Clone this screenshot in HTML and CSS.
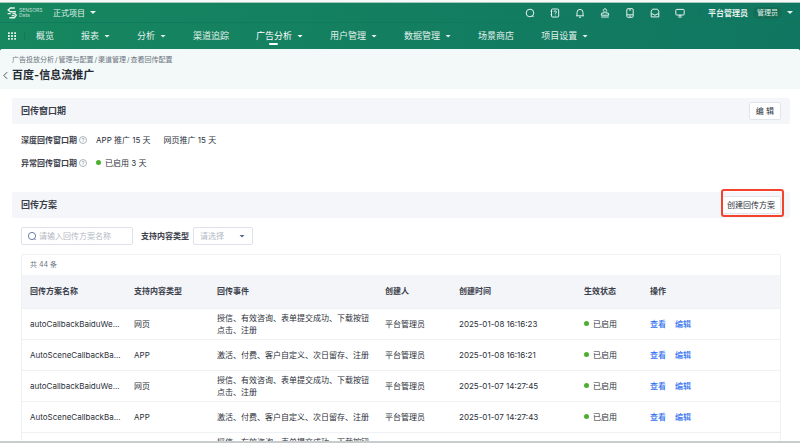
FILE: index.html
```html
<!DOCTYPE html>
<html lang="zh-CN">
<head>
<meta charset="utf-8">
<meta name="viewport" content="width=device-width, initial-scale=1">
<title>百度-信息流推广</title>
<link rel="stylesheet" href="styles.css">
</head>
<body>
<div class="window">
  <header class="header">
    <div class="topbar">
      <a class="logo" href="#" aria-label="SENSORS Data">
        <svg class="logo-mark" viewBox="0 0 10 12" fill="none" stroke="currentColor" stroke-width="1.4">
          <path d="M7.8 1H3.4L1.2 3 3.2 4.8H9M.6 6.6h3.2"/><path d="M5.4 6.6h2.4l1.4 1.6-1.8 2.6H2.4M4.6 8.6h3"/>
        </svg>
        <span class="logo-text"><span>SENSORS</span><span>Data</span></span>
      </a>
      <button class="project" type="button">正式项目<i class="caret"></i></button>
      <div class="tools">
        <button type="button" aria-label="搜索"><svg viewBox="0 0 10 10"><circle cx="5" cy="5" r="3.8"/><path d="M7 7.4l1.6 1.6"/></svg></button>
        <button type="button" aria-label="帮助"><svg viewBox="0 0 10 10"><rect x="1.5" y="1" width="7.2" height="8" rx="1"/><path d="M.6 3.3h1.6M.6 6.7h1.6M4 4a1.2 1.2 0 1 1 1.3 1.2v.7M5.3 6.8v.6"/></svg></button>
        <button type="button" aria-label="通知"><svg viewBox="0 0 10 10"><path d="M2 7.6V4.4a3 3 0 0 1 6 0v3.2M1 7.8h8M4 9.2h2"/></svg></button>
        <button type="button" aria-label="审批"><svg viewBox="0 0 10 10"><path d="M4.2 5V3.8a1.6 1.6 0 1 1 1.6 0V5h2.4l.6 2.2H1.2L1.8 5zM1.2 9h7.6"/></svg></button>
        <button type="button" aria-label="手机"><svg viewBox="0 0 10 10"><rect x="1.8" y=".7" width="6.4" height="8.6" rx="1"/><path d="M2 6.8h6M4.2 8.1h1.6M4 2h2"/></svg></button>
        <button type="button" aria-label="收件箱"><svg viewBox="0 0 10 10"><path d="M1.2 8.9V3.2l1.3-2h5l1.3 2v5.7zM1.2 6h2L4 7h2l.8-1h2"/></svg></button>
        <button type="button" aria-label="屏幕"><svg viewBox="0 0 10 10"><rect x=".8" y="1.4" width="8.4" height="5.6" rx=".8"/><path d="M4 7l1 1.2L6 7M3.2 9h3.6"/></svg></button>
      </div>
      <button class="user" type="button"><strong>平台管理员</strong><span class="role">管理员</span><i class="caret"></i></button>
    </div>
    <nav class="nav">
      <button class="apps" type="button" aria-label="全部应用"><svg viewBox="0 0 9 9"><path d="M0 1.2h9M0 4.5h9M0 7.8h9" stroke="currentColor" stroke-width="2" stroke-dasharray="2 1.5"/></svg></button>
      <a href="#">概览</a>
      <a href="#">报表<i class="caret"></i></a>
      <a href="#">分析<i class="caret"></i></a>
      <a href="#">渠道追踪</a>
      <a href="#" class="active" aria-current="page">广告分析<i class="caret"></i></a>
      <a href="#">用户管理<i class="caret"></i></a>
      <a href="#">数据管理<i class="caret"></i></a>
      <a href="#">场景商店</a>
      <a href="#">项目设置<i class="caret"></i></a>
    </nav>
  </header>
  <main class="page">
    <div class="page-head">
      <nav class="crumbs"><a href="#">广告投放分析</a><span>/</span><a href="#">管理与配置</a><span>/</span><a href="#">渠道管理</a><span>/</span><a href="#">查看回传配置</a></nav>
      <div class="title">
        <a href="#" class="back" aria-label="返回"><svg viewBox="0 0 6 10"><path d="M5 1L1 5l4 4" fill="none" stroke="currentColor"/></svg></a>
        <h1>百度-信息流推广</h1>
      </div>
    </div>
    <div class="content">
      <section>
        <div class="panel"><h2>回传窗口期</h2><button class="btn" type="button">编 辑</button></div>
        <dl class="facts">
          <div><dt>深度回传窗口期<svg class="help" viewBox="0 0 8 8"><circle cx="4" cy="4" r="3.5"/><path d="M3 3.2a1 1 0 1 1 1 1v.6M4 5.5v.7"/></svg></dt><dd>APP 推广 15 天</dd><dd>网页推广 15 天</dd></div>
          <div><dt>异常回传窗口期<svg class="help" viewBox="0 0 8 8"><circle cx="4" cy="4" r="3.5"/><path d="M3 3.2a1 1 0 1 1 1 1v.6M4 5.5v.7"/></svg></dt><dd><i class="dot"></i>已启用 3 天</dd></div>
        </dl>
      </section>
      <section>
        <div class="panel"><h2>回传方案</h2><button class="btn create" type="button">创建回传方案</button></div>
        <form class="filters">
          <label class="search"><svg viewBox="0 0 10 10"><circle cx="5" cy="5" r="3.6"/><path d="M7 7.4l1.6 1.6"/></svg><input type="text" placeholder="请输入回传方案名称" aria-label="回传方案名称"></label>
          <label class="type-label" for="type">支持内容类型</label>
          <span class="select"><select id="type"><option>请选择</option><option>网页</option><option>APP</option></select><i class="caret"></i></span>
        </form>
        <div class="list">
          <p class="total">共 44 条</p>
          <table>
            <colgroup><col class="c-name"><col class="c-type"><col class="c-event"><col class="c-user"><col class="c-time"><col class="c-state"><col></colgroup>
            <thead><tr><th>回传方案名称</th><th>支持内容类型</th><th>回传事件</th><th>创建人</th><th>创建时间</th><th>生效状态</th><th>操作</th></tr></thead>
            <tbody>
              <tr><td>autoCallbackBaiduWe...</td><td>网页</td><td>授信、有效咨询、表单提交成功、下载按钮点击、注册</td><td>平台管理员</td><td>2025-01-08 16:16:23</td><td><i class="dot"></i>已启用</td><td><a href="#">查看</a><a href="#">编辑</a></td></tr>
              <tr><td>AutoSceneCallbackBa...</td><td>APP</td><td>激活、付费、客户自定义、次日留存、注册</td><td>平台管理员</td><td>2025-01-08 16:16:21</td><td><i class="dot"></i>已启用</td><td><a href="#">查看</a><a href="#">编辑</a></td></tr>
              <tr><td>autoCallbackBaiduWe...</td><td>网页</td><td>授信、有效咨询、表单提交成功、下载按钮点击、注册</td><td>平台管理员</td><td>2025-01-07 14:27:45</td><td><i class="dot"></i>已启用</td><td><a href="#">查看</a><a href="#">编辑</a></td></tr>
              <tr><td>AutoSceneCallbackBa...</td><td>APP</td><td>激活、付费、客户自定义、次日留存、注册</td><td>平台管理员</td><td>2025-01-07 14:27:43</td><td><i class="dot"></i>已启用</td><td><a href="#">查看</a><a href="#">编辑</a></td></tr>
              <tr><td></td><td></td><td>授信、有效咨询、表单提交成功、下载按钮点击、注册</td><td></td><td></td><td></td><td></td></tr>
            </tbody>
          </table>
        </div>
      </section>
    </div>
  </main>
</div>
</body>
</html>
```
FILE: styles.css
```css
* { box-sizing: border-box; margin: 0; }
body { background: #f7f9f9; color: #2b3039; font: 8px/12px Inter, "Noto Sans CJK SC", sans-serif; }
a { color: inherit; text-decoration: none; }
button, input, select { font: inherit; color: inherit; padding: 0; border: 0; background: none; }
svg { display: block; fill: none; stroke: currentColor; }
.window { height: 100vh; overflow: hidden; display: flex; flex-direction: column; padding-top: 2px; border-bottom: 2px solid #c9cccd; }
.caret { display: inline-block; width: 6px; height: 3px; background: currentColor; clip-path: polygon(0 0, 100% 0, 50% 100%); }
.dot { display: inline-block; width: 5px; height: 5px; margin-right: 4px; border-radius: 50%; background: #4dae31; vertical-align: 1px; }

.header { flex: none; background: linear-gradient(100deg, #16875f, #107661); border-top: 1px solid #a9c9bf; color: #e3f1ed; }
.topbar { display: flex; align-items: center; height: 20px; padding: 0 7px; border-bottom: 1px solid #107a5c; }
.logo { display: flex; align-items: center; gap: 2px; width: 46px; }
.logo-mark { width: 10px; height: 12px; }
.logo-text { display: flex; flex-direction: column; font-size: 5px; line-height: 5px; opacity: .8; }
.project { display: flex; align-items: center; gap: 5px; }
.tools { display: flex; gap: 15px; margin-left: auto; padding-right: 14px; border-right: 1px solid #167158; }
.tools svg { width: 10px; height: 10px; stroke-width: 1; }
.user { display: flex; align-items: center; margin-left: 8px; }
.role { font-size: 7px; margin: 0 5px; padding: 0 4px; border-radius: 6px; background: #136e55; }
.nav { display: flex; align-items: center; height: 28px; padding: 0 0 2px 8px; font-size: 9px; }
.apps { width: 17px; margin-right: 11px; border-right: 1px solid #137a5a; }
.apps svg { width: 8px; height: 8px; }
.nav a { position: relative; display: flex; align-items: center; gap: 5px; margin-right: 27px; }
.active { color: #fff; }
.active::after { content: ""; position: absolute; left: 13px; bottom: -3px; width: 9px; height: 2px; border-radius: 1px; background: #fff; }

.page { position: relative; flex: 1; min-height: 0; margin-top: -2px; border-radius: 3px 3px 0 0; overflow: hidden; background: #fff; }
.page-head { padding: 5px 12px 5px 3px; background: #f3f9f8; }
.crumbs { display: flex; gap: 1px; padding-left: 9px; font-size: 7px; color: #6c7480; }
.title { display: flex; align-items: center; gap: 4px; }
.back svg { width: 5px; height: 9px; }
h1 { font-size: 11px; line-height: 18px; font-weight: 700; color: #272b34; }
.content { padding: 9px 10px 0 12px; }
.panel { display: flex; align-items: center; justify-content: space-between; height: 26px; padding: 0 9px; border-radius: 2px; background: #f5f6fa; }
h2 { font-size: 9px; line-height: 14px; font-weight: 700; color: #3b404a; }
.btn { height: 18px; padding: 0 6px; border: 1px solid #e1e4ea; border-radius: 2px; background: #fff; }
.create { position: relative; padding: 0 5px; }
.create::after { content: ""; position: absolute; inset: -8px -4px -4px -1px; border: 2px solid #f5422c; border-radius: 3px; }
.facts { padding: 10px 9px 23px; display: grid; gap: 11px; }
.facts div { display: flex; align-items: center; }
dt { display: flex; align-items: center; gap: 2px; width: 75px; font-weight: 700; color: #3b404a; }
dd { margin-right: 13px; }
.help { width: 8px; height: 8px; color: #8d95a5; stroke-width: .7; }
.filters { display: flex; align-items: center; padding: 9px; }
.type-label { font-weight: 700; color: #3b404a; }
.search { display: flex; align-items: center; gap: 2px; width: 112px; height: 18px; margin-right: 8px; padding-left: 5px; border: 1px solid #dfe2ea; border-radius: 2px; }
.search svg { flex: none; width: 10px; height: 10px; color: #6b7ea6; }
.search input { min-width: 0; }
input::placeholder { color: #b4b9c4; opacity: 1; }
.select { display: flex; align-items: center; width: 60px; height: 18px; margin-left: 4px; padding: 0 7px 0 6px; border: 1px solid #dfe2ea; border-radius: 2px; color: #5a6884; }
.select select { flex: 1; appearance: none; color: #b4b9c4; }
.list { margin: 0 9px; border: 1px solid #eff1f4; border-radius: 2px; }
.total { padding: 4px 8px; font-size: 7px; color: #6c7480; }
table { width: 100%; table-layout: fixed; border-collapse: collapse; }
th, td { height: 31px; padding: 0 4px 0 8px; text-align: left; border-bottom: 1px solid #eff1f4; }
th { height: 33px; background: #f3f5f9; font-weight: 700; color: #3b404a; }
td a { margin-right: 9px; color: #3370f0; font-weight: 500; }
.c-name { width: 104px; } .c-type { width: 83px; } .c-event { width: 168px; }
.c-user { width: 74px; } .c-time { width: 125px; } .c-state { width: 66px; }
```
